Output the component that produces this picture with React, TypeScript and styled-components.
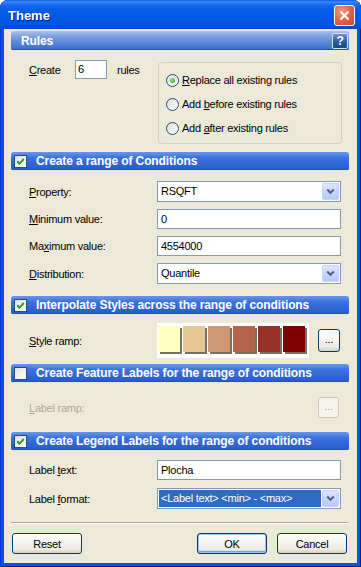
import React from "react";
import styled, { createGlobalStyle } from "styled-components";

const GlobalStyle = createGlobalStyle`
  *, *::before, *::after {
    box-sizing: border-box;
  }
  html, body {
    margin: 0;
    padding: 0;
    background: #ffffff;
  }
  body {
    font-family: "Liberation Sans", Arial, sans-serif;
    font-size: 11px;
    letter-spacing: -0.25px;
    color: #000000;
  }
`;

const Window = styled.div`
  width: 361px;
  height: 567px;
  display: flex;
  flex-direction: column;
  background: #0055e5;
  border-radius: 8px 8px 0 0;
  overflow: hidden;
  box-shadow: inset 1px 0 0 #0831d9, inset -1px 0 0 #001ea0, inset 0 -1px 0 #001ea0;
`;

const TitleBar = styled.div`
  height: 29px;
  flex: none;
  display: flex;
  align-items: center;
  justify-content: space-between;
  padding: 0 6px 0 8px;
  background: linear-gradient(
    to bottom,
    #0a5ae6 0%,
    #3d8df8 7%,
    #1c6ef2 14%,
    #0a5ee8 30%,
    #0058e8 60%,
    #0054e2 85%,
    #0048d4 100%
  );
  border-radius: 8px 8px 0 0;
`;

const Title = styled.span`
  font-family: "Liberation Sans", Arial, sans-serif;
  font-weight: bold;
  font-size: 13px;
  letter-spacing: 0;
  color: #ffffff;
  text-shadow: 1px 1px 0 #0a1883;
  margin-top: 2px;
`;

const CloseButton = styled.div`
  width: 21px;
  height: 21px;
  border: 1px solid #ffffff;
  border-radius: 3px;
  background: radial-gradient(circle at 35% 30%, #f0a08a 0%, #e06a4a 45%, #c8421a 100%);
  display: flex;
  align-items: center;
  justify-content: center;
  margin-top: 2px;
`;

const Body = styled.div`
  flex: 1;
  margin: 0 4px 4px 4px;
  background: #ece9d8;
  padding: 2px 8px 0 7px;
  display: flex;
  flex-direction: column;
`;

const Header = styled.div<{ $light?: boolean; $top: number }>`
  height: ${(p) => (p.$light ? 19 : 18)}px;
  margin-top: ${(p) => p.$top}px;
  flex: none;
  display: flex;
  align-items: center;
  padding: 0 1px 0 3px;
  border-radius: 3px 3px 2px 2px;
  background: ${(p) =>
    p.$light
      ? "linear-gradient(to bottom, #a9c2f0 0%, #7b9fe2 30%, #5684d8 65%, #3a6acb 100%)"
      : "linear-gradient(to bottom, #6b98ec 0%, #3f74de 30%, #2f64d2 70%, #2a5bc8 100%)"};
  box-shadow: inset 0 -1px 0 #2450b4;
  color: #ffffff;
  font-weight: bold;
  font-size: 12px;
  letter-spacing: -0.1px;
`;

const HeaderText = styled.span<{ $indent?: boolean }>`
  margin-left: ${(p) => (p.$indent ? 9 : 7)}px;
  white-space: nowrap;
`;

const HelpIcon = styled.div`
  margin-left: auto;
  width: 16px;
  height: 16px;
  border: 1px solid #d6e2f8;
  border-radius: 2px;
  background: linear-gradient(to bottom, #6f93d4 0%, #2d5aa8 55%, #1c4487 100%);
  color: #ffffff;
  font-size: 12px;
  font-weight: bold;
  line-height: 14px;
  text-align: center;
`;

const CheckBox = styled.div`
  width: 13px;
  height: 13px;
  flex: none;
  border: 1px solid #1c5180;
  background: linear-gradient(135deg, #dcdcd7 0%, #f4f4f2 60%, #ffffff 100%);
  display: flex;
  align-items: center;
  justify-content: center;
`;

const RulesBody = styled.div`
  display: flex;
  align-items: flex-start;
  padding: 10px 7px 0 18px;
`;

const CreateRow = styled.div`
  display: flex;
  align-items: center;
  height: 19px;
`;

const CreateLabel = styled.span`
  width: 46px;
`;

const SmallInput = styled.div`
  width: 32px;
  height: 19px;
  border: 1px solid #7f9db9;
  background: #ffffff;
  padding-left: 2px;
  line-height: 16px;
  margin-right: 10px;
`;

const GroupBox = styled.div`
  margin-left: auto;
  margin-top: 2px;
  width: 184px;
  height: 82px;
  border: 1px solid #d0d0bf;
  border-radius: 4px;
  padding: 5px 0 0 7px;
  display: flex;
  flex-direction: column;
`;

const RadioRow = styled.div`
  height: 24px;
  display: flex;
  align-items: center;
  gap: 3px;
  white-space: nowrap;
`;

const Radio = styled.div<{ $on?: boolean }>`
  width: 13px;
  height: 13px;
  border: 1px solid #1c5180;
  border-radius: 50%;
  background: linear-gradient(135deg, #dcdcd7 0%, #f2f2ef 60%, #ffffff 100%);
  display: flex;
  align-items: center;
  justify-content: center;
  &::after {
    content: "";
    display: ${(p) => (p.$on ? "block" : "none")};
    width: 5px;
    height: 5px;
    border-radius: 50%;
    background: radial-gradient(circle at 40% 40%, #9ee88d 0%, #3fb83a 60%, #24a024 100%);
  }
`;

const FieldList = styled.div<{ $top: number; $gap: number }>`
  display: flex;
  flex-direction: column;
  gap: ${(p) => p.$gap}px;
  padding-top: ${(p) => p.$top}px;
`;

const Field = styled.div`
  display: grid;
  grid-template-columns: 128px 184px;
  align-items: center;
  padding-left: 18px;
`;

const Label = styled.span<{ $disabled?: boolean }>`
  color: ${(p) => (p.$disabled ? "#aca899" : "#000000")};
  white-space: nowrap;
`;

const TextBox = styled.div`
  height: 20px;
  border: 1px solid #7f9db9;
  background: #ffffff;
  padding-left: 3px;
  line-height: 18px;
`;

const Select = styled.div`
  height: 21px;
  border: 1px solid #7f9db9;
  background: #ffffff;
  display: flex;
  align-items: stretch;
  padding: 1px;
`;

const SelectValue = styled.div<{ $highlight?: boolean }>`
  flex: 1;
  padding-left: 2px;
  line-height: 17px;
  margin-right: 1px;
  background: ${(p) => (p.$highlight ? "#316ac5" : "transparent")};
  color: ${(p) => (p.$highlight ? "#ffffff" : "#000000")};
  white-space: nowrap;
`;

const DropButton = styled.div`
  width: 17px;
  border: 1px solid #c3d3fd;
  border-radius: 2px;
  background: linear-gradient(to bottom, #dde6fe 0%, #c7d6fb 50%, #b7c9f7 100%);
  display: flex;
  align-items: center;
  justify-content: center;
`;

const RampRow = styled.div`
  display: flex;
  align-items: center;
  padding: 9px 0 0 18px;
`;

const RampLabel = styled.span`
  width: 128px;
`;

const RampBox = styled.div`
  display: flex;
  gap: 3px;
  background: #ffffff;
  padding: 3px 0 3px 1px;
  width: 152px;
  height: 35px;
  margin-right: 9px;
`;

const Swatch = styled.div<{ $color: string }>`
  width: 22px;
  height: 26px;
  background: ${(p) => p.$color};
  box-shadow: 2px 2px 0 #77725f;
`;

const DotsButton = styled.div<{ $disabled?: boolean }>`
  width: ${(p) => (p.$disabled ? 21 : 22)}px;
  height: ${(p) => (p.$disabled ? 21 : 23)}px;
  border: 1px solid ${(p) => (p.$disabled ? "#cac8bb" : "#003c74")};
  border-radius: 3px;
  background: ${(p) =>
    p.$disabled
      ? "#f5f4ea"
      : "linear-gradient(to bottom, #ffffff 0%, #f4f4f0 50%, #ecebe6 80%, #d6d0c5 100%)"};
  color: ${(p) => (p.$disabled ? "#aca899" : "#000000")};
  display: flex;
  align-items: center;
  justify-content: center;
  line-height: 1;
  padding-bottom: 2px;
`;

const LabelRampRow = styled.div`
  display: flex;
  align-items: center;
  justify-content: space-between;
  padding: 15px 10px 0 18px;
`;

const Separator = styled.div`
  margin-top: 13px;
  height: 2px;
  border-top: 1px solid #aca899;
  border-bottom: 1px solid #ffffff;
  margin-right: 1px;
`;

const ButtonRow = styled.div`
  display: flex;
  align-items: center;
  gap: 10px;
  padding: 9px 2px 0 1px;
`;

const Spacer = styled.div`
  flex: 1;
`;

const PushButton = styled.div<{ $default?: boolean }>`
  width: 70px;
  height: 21px;
  border: 1px solid #003c74;
  border-radius: 3px;
  background: linear-gradient(to bottom, #ffffff 0%, #f4f4f0 45%, #ecebe6 80%, #d6d0c5 100%);
  box-shadow: ${(p) => (p.$default ? "inset 0 0 0 1px #a6c1ef, inset 0 -1px 0 1px #7c9ce6" : "none")};
  display: flex;
  align-items: center;
  justify-content: center;
`;

const Check = () => (
  <svg width="9" height="9" viewBox="0 0 9 9">
    <path d="M1.2 4.2 L3.5 6.6 L7.8 2" stroke="#21a121" strokeWidth="2" fill="none" />
  </svg>
);

const Chevron = () => (
  <svg width="9" height="7" viewBox="0 0 9 7">
    <path d="M1.2 1.5 L4.5 4.8 L7.8 1.5" stroke="#4d6185" strokeWidth="2" fill="none" />
  </svg>
);

const ramp = ["#ffffc0", "#e6c896", "#cd9873", "#b4644b", "#963228", "#800000"];

const App: React.FC = () => {
  return (
    <>
      <GlobalStyle />
      <Window>
        <TitleBar>
          <Title>Theme</Title>
          <CloseButton>
            <svg width="11" height="11" viewBox="0 0 11 11">
              <path d="M1.5 1.5 L9.5 9.5 M9.5 1.5 L1.5 9.5" stroke="#ffffff" strokeWidth="2" />
            </svg>
          </CloseButton>
        </TitleBar>
        <Body>
          <Header $light $top={0}>
            <HeaderText>Rules</HeaderText>
            <HelpIcon>?</HelpIcon>
          </Header>
          <RulesBody>
            <CreateRow>
              <CreateLabel><u>C</u>reate</CreateLabel>
              <SmallInput>6</SmallInput>
              <span>rules</span>
            </CreateRow>
            <GroupBox>
              <RadioRow>
                <Radio $on />
                <span><u>R</u>eplace all existing rules</span>
              </RadioRow>
              <RadioRow>
                <Radio />
                <span>Add <u>b</u>efore existing rules</span>
              </RadioRow>
              <RadioRow>
                <Radio />
                <span>Add <u>a</u>fter existing rules</span>
              </RadioRow>
            </GroupBox>
          </RulesBody>

          <Header $top={8}>
            <CheckBox><Check /></CheckBox>
            <HeaderText $indent>Create a range of Conditions</HeaderText>
          </Header>
          <FieldList $top={11} $gap={7}>
            <Field>
              <Label><u>P</u>roperty:</Label>
              <Select>
                <SelectValue>RSQFT</SelectValue>
                <DropButton><Chevron /></DropButton>
              </Select>
            </Field>
            <Field>
              <Label><u>M</u>inimum value:</Label>
              <TextBox>0</TextBox>
            </Field>
            <Field>
              <Label>Ma<u>x</u>imum value:</Label>
              <TextBox>4554000</TextBox>
            </Field>
            <Field>
              <Label><u>D</u>istribution:</Label>
              <Select>
                <SelectValue>Quantile</SelectValue>
                <DropButton><Chevron /></DropButton>
              </Select>
            </Field>
          </FieldList>

          <Header $top={12}>
            <CheckBox><Check /></CheckBox>
            <HeaderText $indent>Interpolate Styles across the range of conditions</HeaderText>
          </Header>
          <RampRow>
            <RampLabel><u>S</u>tyle ramp:</RampLabel>
            <RampBox>
              {ramp.map((c) => (
                <Swatch key={c} $color={c} />
              ))}
            </RampBox>
            <DotsButton>...</DotsButton>
          </RampRow>

          <Header $top={6}>
            <CheckBox />
            <HeaderText $indent>Create Feature Labels for the range of conditions</HeaderText>
          </Header>
          <LabelRampRow>
            <Label $disabled><u>L</u>abel ramp:</Label>
            <DotsButton $disabled>...</DotsButton>
          </LabelRampRow>

          <Header $top={14}>
            <CheckBox><Check /></CheckBox>
            <HeaderText $indent>Create Legend Labels for the range of conditions</HeaderText>
          </Header>
          <FieldList $top={10} $gap={8}>
            <Field>
              <Label>Label <u>t</u>ext:</Label>
              <TextBox>Plocha</TextBox>
            </Field>
            <Field>
              <Label>Label <u>f</u>ormat:</Label>
              <Select>
                <SelectValue $highlight>&lt;Label text&gt; &lt;min&gt; - &lt;max&gt;</SelectValue>
                <DropButton><Chevron /></DropButton>
              </Select>
            </Field>
          </FieldList>

          <Separator />
          <ButtonRow>
            <PushButton>Reset</PushButton>
            <Spacer />
            <PushButton $default>OK</PushButton>
            <PushButton>Cancel</PushButton>
          </ButtonRow>
        </Body>
      </Window>
    </>
  );
};

export default App;
